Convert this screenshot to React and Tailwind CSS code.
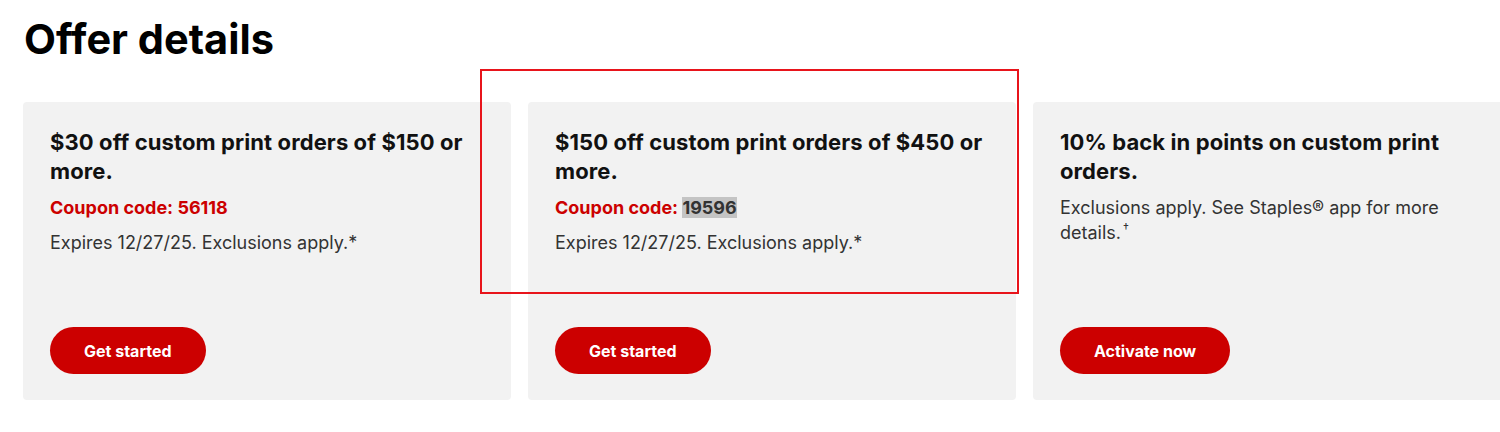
import React from 'react'

const offers = [
  {
    title: '$30 off custom print orders of $150 or more.',
    code: '56118',
    note: 'Expires 12/27/25. Exclusions apply.*',
    cta: 'Get started',
  },
  {
    title: '$150 off custom print orders of $450 or more.',
    code: '19596',
    selected: true,
    note: 'Expires 12/27/25. Exclusions apply.*',
    cta: 'Get started',
  },
  {
    title: '10% back in points on custom print orders.',
    note: (
      <>
        Exclusions apply. See Staples® app for more details.
        <span className="relative -top-[7px] ml-[2px] text-[12px] leading-none">†</span>
      </>
    ),
    cta: 'Activate now',
  },
]

function OfferCard({ offer }) {
  return (
    <div className="flex h-[298px] w-[488px] shrink-0 flex-col rounded-[4px] bg-[#f2f2f2] pl-[27px] pr-[20px] pt-[26px] pb-[26px]">
      <h3 className="text-[22px] font-bold leading-[29px] tracking-[0.1px] text-[#111]">{offer.title}</h3>
      {offer.code ? (
        <>
          <p className="mt-[10px] text-[18px] font-bold leading-[24px] text-[#cc0000]">
            Coupon code:{' '}
            {offer.selected ? (
              <span className="bg-[#c4c4c4] text-[#333]">{offer.code}</span>
            ) : (
              offer.code
            )}
          </p>
          <p className="mt-[11px] text-[18px] leading-[24px] text-[#333]">{offer.note}</p>
        </>
      ) : (
        <p className="mt-[9px] pr-[30px] text-[18px] leading-[25px] text-[#333]">{offer.note}</p>
      )}
      <div className="mt-auto">
        <button className="h-[47px] rounded-full bg-[#cc0000] px-[34px] text-[16px] font-bold text-white">
          {offer.cta}
        </button>
      </div>
    </div>
  )
}

export default function App() {
  return (
    <div className="relative h-[432px] w-[1500px] overflow-hidden bg-white font-['Inter','Liberation_Sans',sans-serif]">
      <h1 className="pl-[24px] pt-[14px] text-[41.5px] font-bold leading-[50px] text-black">
        Offer details
      </h1>
      <div className="mt-[38px] flex gap-[17px] pl-[23px]">
        {offers.map((o, i) => (
          <OfferCard key={i} offer={o} />
        ))}
      </div>
      {/* annotation box */}
      <div className="pointer-events-none absolute left-[480px] top-[69px] h-[225px] w-[539px] border-2 border-[#e8141b]" />
    </div>
  )
}
